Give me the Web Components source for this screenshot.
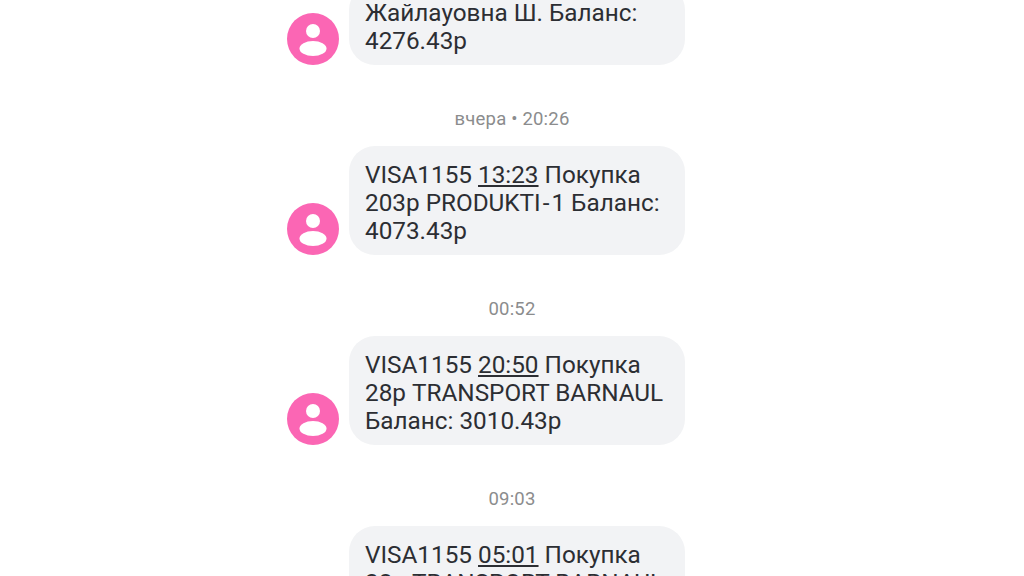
<!DOCTYPE html>
<html>
<head>
<meta charset="utf-8">
<title>Сообщения</title>
<style>
  html, body { margin: 0; height: 576px; overflow: hidden; background: #fff; font-family: 'Roboto', 'Liberation Sans', sans-serif; }
  .dash { margin: 0 2px; }
</style>
</head>
<body>
<sms-thread>
  <sms-message>Жайлауовна Ш. Баланс:<br>4276.43р</sms-message>
  <sms-stamp>вчера • 20:26</sms-stamp>
  <sms-message>VISA1155 <u>13:23</u> Покупка<br>203р PRODUKTI<span class="dash">-</span>1 Баланс:<br>4073.43р</sms-message>
  <sms-stamp>00:52</sms-stamp>
  <sms-message>VISA1155 <u>20:50</u> Покупка<br>28р TRANSPORT BARNAUL<br>Баланс: 3010.43р</sms-message>
  <sms-stamp>09:03</sms-stamp>
  <sms-message>VISA1155 <u>05:01</u> Покупка<br>28р TRANSPORT BARNAUL<br>Баланс: 2982.43р</sms-message>
</sms-thread>
<script>
class SmsThread extends HTMLElement {
  constructor() {
    super();
    this.attachShadow({ mode: 'open' });
    this.shadowRoot.innerHTML = `
      <style>
        :host { display: flex; flex-direction: column; align-items: center; margin-top: -16px; }
      </style>
      <slot></slot>`;
  }
}

class SmsStamp extends HTMLElement {
  constructor() {
    super();
    this.attachShadow({ mode: 'open' });
    this.shadowRoot.innerHTML = `
      <style>
        :host { display: block; height: 20px; margin: 44px 0 17px; line-height: 20px; font-size: 18.5px; letter-spacing: .2px; color: #8b8c8d; text-align: center; }
      </style>
      <slot></slot>`;
  }
}

const messageTemplate = document.createElement('template');
messageTemplate.innerHTML = `
  <style>
    :host { display: flex; align-items: flex-end; gap: 10px; padding-right: 52px; }
    .avatar { width: 52px; height: 52px; flex: none; display: block; }
    .bubble {
      box-sizing: border-box; width: 336px; padding: 15px 16px 10px;
      border-radius: 26px; background: #f2f3f5; color: #2c2e33;
      font-size: 24.3px; line-height: 28px; white-space: nowrap;
    }
  </style>
  <svg class="avatar" viewBox="0 0 52 52">
    <circle cx="26" cy="26" r="26" fill="#fb66b4"/>
    <circle cx="26" cy="18" r="7" fill="#fff"/>
    <ellipse cx="26" cy="35.5" rx="13.5" ry="7.5" fill="#fff"/>
  </svg>
  <div class="bubble"><slot></slot></div>
`;

class SmsMessage extends HTMLElement {
  constructor() {
    super();
    this.attachShadow({ mode: 'open' });
    this.shadowRoot.appendChild(messageTemplate.content.cloneNode(true));
  }
}

customElements.define('sms-thread', SmsThread);
customElements.define('sms-stamp', SmsStamp);
customElements.define('sms-message', SmsMessage);
</script>
</body>
</html>
